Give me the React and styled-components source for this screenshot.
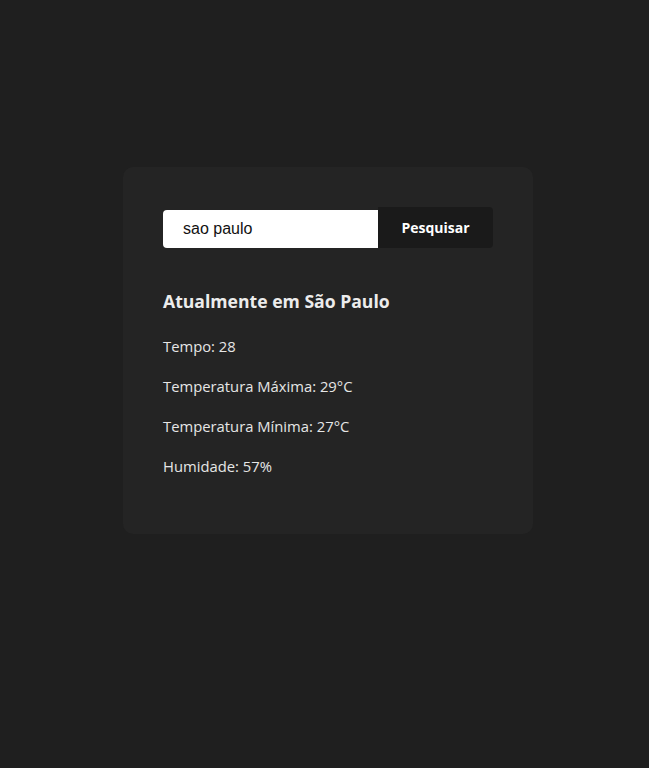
import React from "react";
import styled, { createGlobalStyle } from "styled-components";

const GlobalStyle = createGlobalStyle`
  body {
    margin: 0;
    background: #1f1f1f;
    font-family: "Open Sans", "Noto Sans", sans-serif;
    color: #e8e8e8;
  }
`;

const Page = styled.main`
  min-height: 768px;
  padding: 167px 0 0 123px;
  box-sizing: border-box;
`;

const Card = styled.section`
  width: 410px;
  box-sizing: border-box;
  padding: 40px 40px 56px;
  background: #242424;
  border-radius: 10px;
`;

const SearchRow = styled.form`
  display: flex;
  align-items: flex-end;
  height: 41px;
`;

const Input = styled.input`
  width: 215px;
  height: 38px;
  box-sizing: border-box;
  border: none;
  border-radius: 4px 0 0 4px;
  padding: 0 20px;
  font-family: "Liberation Sans", Arial, sans-serif;
  font-size: 16px;
  color: #111;
  background: #fff;
  outline: none;
`;

const Button = styled.button`
  width: 115px;
  height: 41px;
  border: none;
  border-radius: 0 4px 4px 0;
  background: #1a1a1a;
  color: #fff;
  font-family: "Open Sans", sans-serif;
  font-weight: 700;
  font-size: 14px;
  cursor: pointer;
`;

const Title = styled.h2`
  margin: 41px 0 21px;
  font-size: 17.6px;
  font-weight: 700;
  line-height: 24px;
  color: #ececec;
`;

const Info = styled.p`
  margin: 0 0 16px;
  font-size: 14.8px;
  line-height: 24px;
  color: #e6e6e6;

  &:last-child {
    margin-bottom: 0;
  }
`;

export default function App() {
  return (
    <>
      <GlobalStyle />
      <Page>
        <Card>
          <SearchRow onSubmit={(e) => e.preventDefault()}>
            <Input defaultValue="sao paulo" />
            <Button type="submit">Pesquisar</Button>
          </SearchRow>
          <Title>Atualmente em São Paulo</Title>
          <Info>Tempo: 28</Info>
          <Info>Temperatura Máxima: 29°C</Info>
          <Info>Temperatura Mínima: 27°C</Info>
          <Info>Humidade: 57%</Info>
        </Card>
      </Page>
    </>
  );
}
